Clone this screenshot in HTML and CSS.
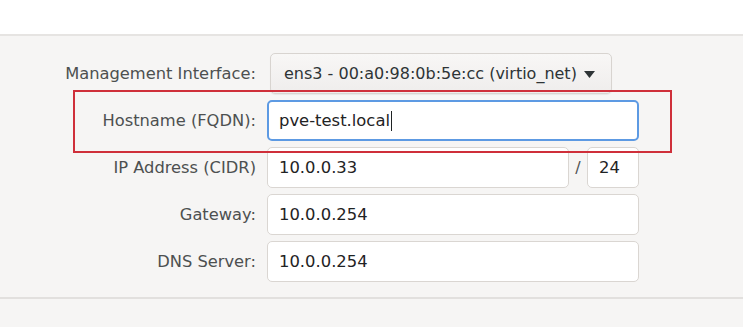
FILE: index.html
```html
<!DOCTYPE html>
<html lang="en">
<head>
<meta charset="utf-8">
<title>Network Configuration</title>
<link rel="stylesheet" href="styles.css">
</head>
<body>
<div class="header"></div>
<main class="content">
  <div class="form">
    <label class="label">Management Interface:</label>
    <div class="field">
      <button class="combo" type="button">
        <span>ens3 - 00:a0:98:0b:5e:cc (virtio_net)</span>
        <svg class="arrow" width="11" height="7" viewBox="0 0 11 7"><path d="M0 0 H11 L5.5 7 Z" fill="#2e3436"/></svg>
      </button>
    </div>

    <label class="label">Hostname (FQDN):</label>
    <div class="field">
      <div class="entry focused">pve-test.local<span class="caret"></span></div>
    </div>

    <label class="label">IP Address (CIDR)</label>
    <div class="field cidr">
      <div class="entry ip">10.0.0.33</div>
      <span class="slash">/</span>
      <div class="entry mask">24</div>
    </div>

    <label class="label">Gateway:</label>
    <div class="field">
      <div class="entry">10.0.0.254</div>
    </div>

    <label class="label">DNS Server:</label>
    <div class="field">
      <div class="entry">10.0.0.254</div>
    </div>
  </div>
  <div class="highlight"></div>
</main>
<div class="footer"></div>
</body>
</html>
```
FILE: styles.css
```css
html, body {
  margin: 0;
  padding: 0;
}
body {
  width: 743px;
  height: 327px;
  overflow: hidden;
  background: #f6f5f4;
  font-family: "DejaVu Sans", "Noto Sans", sans-serif;
  font-size: 16px;
  color: #2e3436;
}
.header {
  height: 34px;
  background: #ffffff;
  border-bottom: 2px solid #e6e4e2;
}
.content {
  position: relative;
  height: 244px;
  padding-top: 17px;
  border-bottom: 2px solid #e2e0de;
  background: #f6f5f4;
}
.form {
  display: grid;
  grid-template-columns: 256px 372px;
  grid-auto-rows: 41px;
  column-gap: 11px;
  row-gap: 6px;
}
.label {
  display: flex;
  align-items: center;
  justify-content: flex-end;
  color: #4d5050;
  font-size: 16.3px;
  white-space: nowrap;
}
.field {
  display: flex;
  align-items: stretch;
}
.combo {
  margin-left: 3px;
  width: 342px;
  display: flex;
  align-items: center;
  justify-content: flex-start;
  padding: 0 0 0 13px;
  box-sizing: border-box;
  font: inherit;
  color: #2e3436;
  background: linear-gradient(#f8f7f6, #efedec);
  border: 1px solid #d8d4d0;
  border-radius: 5px;
  box-shadow: 0 1px 1px rgba(0,0,0,0.06);
  white-space: nowrap;
}
.arrow {
  margin-left: 7px;
  margin-top: 1px;
}
.entry {
  flex: 1;
  display: flex;
  align-items: center;
  box-sizing: border-box;
  padding-left: 11px;
  background: #ffffff;
  border: 1px solid #dad6d2;
  border-radius: 5px;
  color: #1f2324;
  font-size: 16.4px;
  white-space: nowrap;
}
.entry.focused {
  border: 2px solid #5d9ae3;
  padding-left: 10px;
}
.caret {
  display: inline-block;
  width: 1px;
  height: 20px;
  margin-left: 1px;
  background: #1f2324;
}
.cidr .ip {
  flex: 0 0 302px;
}
.slash {
  width: 18px;
  display: flex;
  align-items: center;
  justify-content: center;
  color: #505353;
}
.cidr .mask {
  flex: 0 0 52px;
  padding-left: 11px;
}
.highlight {
  position: absolute;
  left: 73px;
  top: 54px;
  width: 599px;
  height: 63px;
  box-sizing: border-box;
  border: 2px solid #cf2f3a;
  pointer-events: none;
}
.footer {
  height: 31px;
  background: #f6f5f4;
}
```
